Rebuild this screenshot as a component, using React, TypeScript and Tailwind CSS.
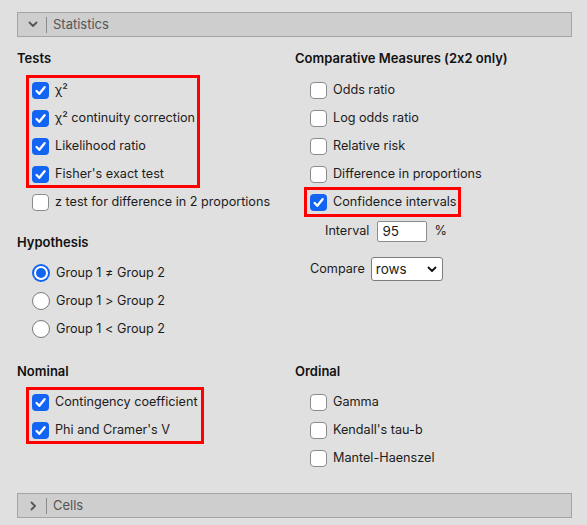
import React from "react";

const font = { fontFamily: 'Inter, "Liberation Sans", Arial, sans-serif' };

function Checkbox({ checked }: { checked?: boolean }) {
  if (checked) {
    return (
      <span className="w-[17px] h-[17px] shrink-0 rounded-[4px] bg-[#1464f4] flex items-center justify-center">
        <svg width="13" height="13" viewBox="0 0 13 13">
          <path d="M2.6 7 L5.3 9.8 L10.6 3.2" fill="none" stroke="white" strokeWidth="2.3" strokeLinecap="round" strokeLinejoin="round" />
        </svg>
      </span>
    );
  }
  return <span className="w-[17px] h-[17px] shrink-0 rounded-[4px] bg-white border border-[#8c8c8c]" />;
}

function Radio({ checked }: { checked?: boolean }) {
  if (checked) {
    return (
      <span className="w-[18px] h-[18px] shrink-0 rounded-full bg-[#1464f4] flex items-center justify-center">
        <span className="w-[14px] h-[14px] rounded-full bg-white flex items-center justify-center">
          <span className="w-[10px] h-[10px] rounded-full bg-[#1464f4]" />
        </span>
      </span>
    );
  }
  return <span className="w-[18px] h-[18px] shrink-0 rounded-full bg-white border border-[#7a7a7a]" />;
}

function Row({ label, checked, inBox, radio }: { label: string; checked?: boolean; inBox?: boolean; radio?: boolean }) {
  return (
    <div className={`flex items-center h-[28px] gap-[6px] ${inBox ? "pl-[3px]" : "pl-[15px]"}`}>
      {radio ? <Radio checked={checked} /> : <Checkbox checked={checked} />}
      <span className="text-[12.65px] leading-4 text-[#1c1c1c] whitespace-nowrap">{label}</span>
    </div>
  );
}

function Title({ children }: { children: React.ReactNode }) {
  return <div className="text-[13px] leading-4 h-4 font-semibold text-[#111]">{children}</div>;
}

function RedBox({ className, children }: { className: string; children: React.ReactNode }) {
  return (
    <div className={`border-[3px] border-[#ff0000] ${className}`}>
      <div className="-mt-[2px] -mb-[3px]">{children}</div>
    </div>
  );
}

function SectionBar({ label, open }: { label: string; open?: boolean }) {
  return (
    <div className="h-[25px] bg-[#cecece] border border-[#a4a4a4] flex items-center">
      <div className="w-[28px] flex justify-center pl-[2px]">
        {open ? (
          <svg width="10" height="7" viewBox="0 0 10 7">
            <path d="M1.5 1.5 L5 5 L8.5 1.5" fill="none" stroke="#555" strokeWidth="1.8" strokeLinecap="round" strokeLinejoin="round" />
          </svg>
        ) : (
          <svg width="7" height="10" viewBox="0 0 7 10">
            <path d="M1.5 1.5 L5 5 L1.5 8.5" fill="none" stroke="#555" strokeWidth="1.8" strokeLinecap="round" strokeLinejoin="round" />
          </svg>
        )}
      </div>
      <div className="w-px h-[16px] bg-[#8a8a8a]" />
      <span className="ml-[6px] text-[13px] text-[#555]">{label}</span>
    </div>
  );
}

export default function App() {
  return (
    <div
      className="w-[587px] h-[525px] bg-[#e0e0e0] pt-[12px] pl-[17px] pr-[15px] [font-feature-settings:'calt'_0]"
      style={font}
    >
      <SectionBar label="Statistics" open />

      <div className="grid grid-cols-[278px_1fr] mt-[13px]">
        {/* left: tests + hypothesis */}
        <div>
          <Title>Tests</Title>
          <RedBox className="mt-[9px] ml-[9px] w-[174px]">
            <Row inBox checked label="χ²" />
            <Row inBox checked label="χ² continuity correction" />
            <Row inBox checked label="Likelihood ratio" />
            <Row inBox checked label="Fisher's exact test" />
          </RedBox>
          <Row label="z test for difference in 2 proportions" />

          <div className="mt-[18px]">
            <Title>Hypothesis</Title>
          </div>
          <div className="mt-[9px]">
            <Row radio checked label="Group 1 ≠ Group 2" />
            <Row radio label="Group 1 > Group 2" />
            <Row radio label="Group 1 < Group 2" />
          </div>
        </div>

        {/* right: comparative measures */}
        <div>
          <Title>Comparative Measures (2x2 only)</Title>
          <div className="mt-[10px]">
            <Row label="Odds ratio" />
            <Row label="Log odds ratio" />
            <Row label="Relative risk" />
            <Row label="Difference in proportions" />
          </div>
          <div className="-mt-px ml-[9px] w-[157px] border-[3px] border-[#ff0000]">
            <div className="-my-[2px]">
              <Row inBox checked label="Confidence intervals" />
            </div>
          </div>
          <div className="h-[28px] flex items-center pl-[30px] text-[12.65px] text-[#1c1c1c]">
            <span>Interval</span>
            <div className="ml-[8px] w-[50px] h-[21px] bg-white border border-[#8c8c8c] rounded-[2px] flex items-center pl-[4px] text-[13.5px]">
              95
            </div>
            <span className="ml-[7px]">%</span>
          </div>
          <div className="mt-[10px] h-[28px] flex items-center pl-[15px] text-[12.65px] text-[#1c1c1c]">
            <span>Compare</span>
            <div className="ml-[6px] w-[72px] h-[24px] bg-white border border-[#7d7d7d] rounded-[3px] flex items-center justify-between pl-[4px] pr-[5px] text-[13.5px]">
              <span>rows</span>
              <svg width="10" height="7" viewBox="0 0 10 7">
                <path d="M1.5 1.5 L5 5 L8.5 1.5" fill="none" stroke="#111" strokeWidth="1.8" strokeLinecap="round" strokeLinejoin="round" />
              </svg>
            </div>
          </div>
        </div>

        {/* nominal */}
        <div className="mt-[20px]">
          <Title>Nominal</Title>
          <RedBox className="mt-[8px] ml-[9px] w-[178px]">
            <Row inBox checked label="Contingency coefficient" />
            <Row inBox checked label="Phi and Cramer's V" />
          </RedBox>
        </div>

        {/* ordinal */}
        <div className="mt-[20px]">
          <Title>Ordinal</Title>
          <div className="mt-[9px]">
            <Row label="Gamma" />
            <Row label="Kendall's tau-b" />
            <Row label="Mantel-Haenszel" />
          </div>
        </div>
      </div>

      <div className="mt-[21px]">
        <SectionBar label="Cells" />
      </div>
    </div>
  );
}
